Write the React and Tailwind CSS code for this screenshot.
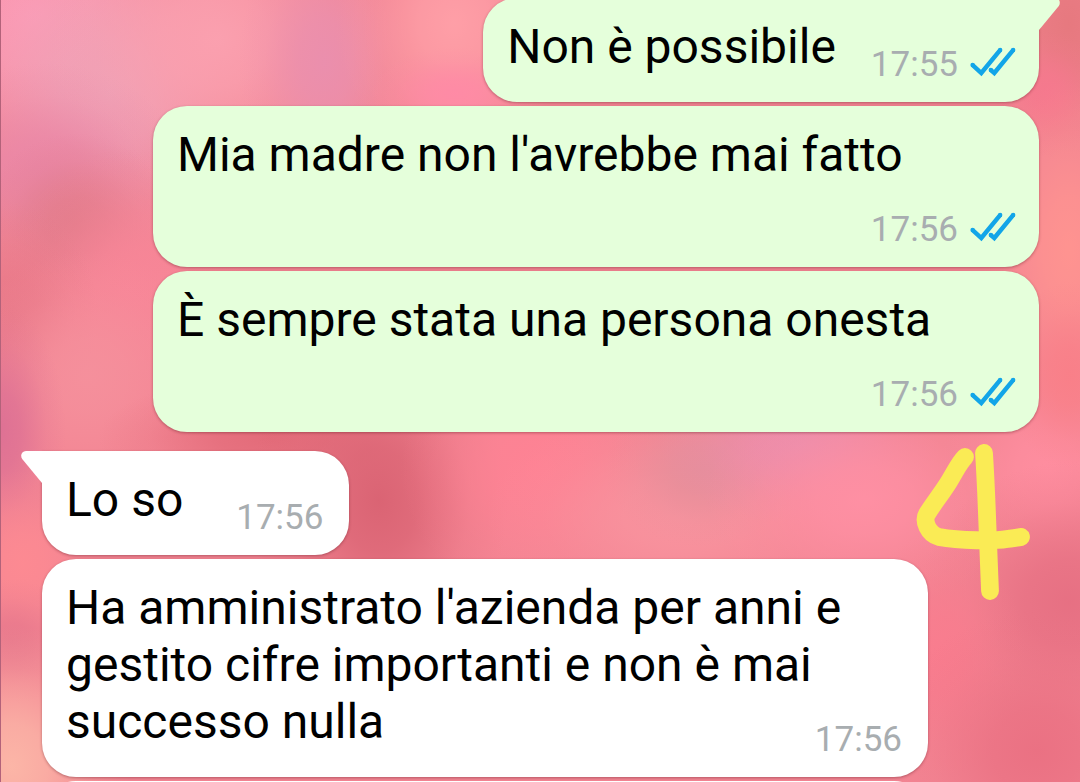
/**
 * Chat thread
 * Sent and received bubbles over a soft pink wallpaper
 */

import clsx from 'clsx';

const MESSAGES = [
  { id: 1, text: 'Non è possibile', time: '17:55', sent: true, tail: true },
  { id: 2, text: "Mia madre non l'avrebbe mai fatto", time: '17:56', sent: true },
  { id: 3, text: 'È sempre stata una persona onesta', time: '17:56', sent: true },
  { id: 4, text: 'Lo so', time: '17:56', tail: true, note: true },
  {
    id: 5,
    text: "Ha amministrato l'azienda per anni e gestito cifre importanti e non è mai successo nulla",
    time: '17:56',
  },
];

// Soft colour spots of the wallpaper, in percent of its box
const SPOTS = [
  { cx: 3, cy: 2, rx: 18, ry: 22, color: '#fd9cb8' },
  { cx: 10, cy: 12, rx: 15, ry: 22, color: '#eea3b8' },
  { cx: 20, cy: 5, rx: 16, ry: 20, color: '#fba1b0' },
  { cx: 30, cy: 8, rx: 8, ry: 18, color: '#ea8fae' },
  { cx: 42, cy: 3, rx: 11, ry: 18, color: '#ffa0a8' },
  { cx: 42, cy: 12, rx: 8, ry: 6, color: '#ff8aa6' },
  { cx: 4, cy: 22, rx: 13, ry: 14, color: '#ea86a6' },
  { cx: 7, cy: 29, rx: 9, ry: 12, color: '#df7a88' },
  { cx: 12, cy: 37, rx: 12, ry: 18, color: '#f88698' },
  { cx: 1, cy: 40, rx: 8, ry: 14, color: '#e87888' },
  { cx: 8, cy: 48, rx: 12, ry: 16, color: '#f5909c' },
  { cx: 0, cy: 55, rx: 6, ry: 16, color: '#dd7094' },
  { cx: 25, cy: 56, rx: 16, ry: 8, color: '#e26a78' },
  { cx: 35, cy: 64, rx: 12, ry: 22, color: '#d96272' },
  { cx: 50, cy: 60, rx: 13, ry: 17, color: '#ff8294' },
  { cx: 63, cy: 66, rx: 18, ry: 14, color: '#f9949f' },
  { cx: 65, cy: 60, rx: 9, ry: 10, color: '#e58e9a' },
  { cx: 74, cy: 57, rx: 13, ry: 10, color: '#ea8eae' },
  { cx: 80, cy: 64, rx: 15, ry: 14, color: '#ff90a4' },
  { cx: 97, cy: 60, rx: 10, ry: 14, color: '#ff8ea0' },
  { cx: 99, cy: 3, rx: 8, ry: 18, color: '#e6787e' },
  { cx: 97, cy: 12, rx: 5, ry: 8, color: '#f6788e' },
  { cx: 99, cy: 32, rx: 8, ry: 22, color: '#ff9490' },
  { cx: 99, cy: 48, rx: 6, ry: 12, color: '#f97f88' },
  { cx: 99, cy: 77, rx: 14, ry: 18, color: '#e66f82' },
  { cx: 87, cy: 84, rx: 8, ry: 16, color: '#f97c8e' },
  { cx: 96, cy: 96, rx: 14, ry: 18, color: '#ea7082' },
  { cx: 2, cy: 72, rx: 7, ry: 12, color: '#fd8a92' },
  { cx: 1, cy: 82, rx: 6, ry: 8, color: '#e8788c' },
  { cx: 1, cy: 98, rx: 11, ry: 18, color: '#fcb8a8' },
];

const Wallpaper = () => (
  <svg
    className="absolute inset-0 size-full"
    viewBox="0 0 100 100"
    preserveAspectRatio="none"
    aria-hidden="true"
  >
    <defs>
      {SPOTS.map((spot, i) => (
        <radialGradient key={i} id={`spot-${i}`}>
          <stop offset="0" stopColor={spot.color} stopOpacity="0.95" />
          <stop offset="0.3" stopColor={spot.color} stopOpacity="0.75" />
          <stop offset="0.7" stopColor={spot.color} stopOpacity="0.2" />
          <stop offset="1" stopColor={spot.color} stopOpacity="0" />
        </radialGradient>
      ))}
    </defs>
    {SPOTS.map((spot, i) => (
      <ellipse key={i} cx={spot.cx} cy={spot.cy} rx={spot.rx} ry={spot.ry} fill={`url(#spot-${i})`} />
    ))}
  </svg>
);

const ReadTicks = () => (
  <svg
    className="mb-1.5 h-[30px] w-[46px]"
    viewBox="0 0 46 30"
    fill="none"
    stroke="#12a5e8"
    strokeWidth="4.4"
    role="img"
    aria-label="Letto"
  >
    <path d="M2.4 17.8 11.3 26 30.3 2.8" />
    <path d="M20.6 22.8 24.3 26 43.3 2.8" />
    <g fill="#12a5e8" stroke="none">
      <circle cx="2.6" cy="18" r="2.2" />
      <circle cx="30.2" cy="3" r="2.2" />
      <circle cx="43.2" cy="3" r="2.2" />
      <circle cx="20.8" cy="23" r="2.2" />
    </g>
  </svg>
);

const Tail = ({ sent }) => (
  <svg
    className={clsx(
      'absolute top-0 h-8 w-[22px]',
      sent ? '-right-[21px] -scale-x-100 fill-[#e5ffdb]' : '-left-[21px] fill-white'
    )}
    viewBox="0 0 22 32"
    aria-hidden="true"
  >
    <path d="M22 0H5C0.5 0 -1 4.5 1.2 8L21 32H22Z" />
  </svg>
);

/* Handwritten number over the thread */
const HandNote = () => (
  <svg
    className="absolute -top-2 right-2 h-40 w-[116px]"
    viewBox="0 0 116 160"
    fill="none"
    stroke="#faeb55"
    strokeWidth="17.8"
    strokeLinecap="round"
    strokeLinejoin="round"
    role="img"
    aria-label="4"
  >
    <path d="M50 14C44 20 40 29 35 37C28 49 20 58 12 71C8 78 13 91 24 94C45 98 80 98 92 96C98 95 102 95 106 94" />
    <path d="M69 10C71 40 72 70 73 98L75 148" />
  </svg>
);

const Message = ({ message }) => {
  const { text, time, sent, tail, note } = message;

  return (
    <li className={clsx('relative flex', sent ? 'justify-end' : 'justify-start', tail && !sent && 'mt-[15px]')}>
      <div
        className={clsx(
          'relative flow-root max-w-[886px] pt-5 pb-4 pl-6',
          'rounded-[34px] shadow-[0_1px_3px_rgba(90,20,30,0.4)]',
          sent ? 'bg-[#e5ffdb] pr-[23px]' : 'bg-white pr-[26px]',
          tail && (sent ? 'rounded-tr-none' : 'rounded-tl-none')
        )}
      >
        {tail && <Tail sent={sent} />}
        <p className="text-[48px] leading-[57px] text-black">
          {text}
          {/* Sits beside the last line, or drops below it when there is no room */}
          <span
            className={clsx(
              'float-right mt-[26px] flex items-center gap-3 text-[35px] leading-[42px] text-[#a8adb0]',
              sent ? 'ml-[35px]' : 'ml-[53px]'
            )}
          >
            <time>{time}</time>
            {sent && <ReadTicks />}
          </span>
        </p>
      </div>
      {note && <HandNote />}
    </li>
  );
};

export default function App() {
  return (
    <main className="relative h-screen overflow-hidden border-l border-[#b3627a] bg-[#f38593] font-['Roboto',sans-serif]">
      <Wallpaper />
      <ul className="relative -mt-0.5 flex flex-col gap-1 pr-[41px] pl-[41px]">
        {MESSAGES.map((message) => (
          <Message key={message.id} message={message} />
        ))}
        {/* Next message, just coming into view */}
        <li className="h-26 max-w-[886px] rounded-[34px] bg-white" />
      </ul>
    </main>
  );
}
